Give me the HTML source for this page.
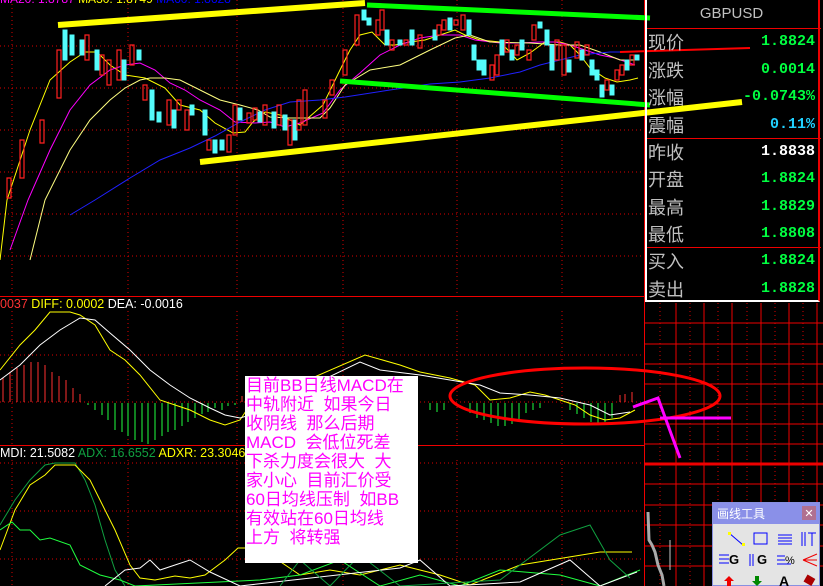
<!DOCTYPE html>
<html><head><meta charset="utf-8"><style>
html,body{margin:0;padding:0;background:#000;width:823px;height:586px;overflow:hidden;}
body{position:relative;font-family:"Liberation Sans","Noto Sans CJK SC",sans-serif;}
.lbl{position:absolute;left:648px;color:#c0c0c0;font-size:18px;font-family:"Noto Sans CJK SC","WenQuanYi Zen Hei",sans-serif;line-height:20px;}
.val{position:absolute;right:8px;color:#00ff40;font-size:15px;font-weight:bold;font-family:"Liberation Mono",monospace;line-height:20px;}
#note{position:absolute;left:245px;top:376px;width:173px;height:187px;background:#fff;color:#f0f;font-size:17px;line-height:19px;font-family:"Liberation Sans","Noto Sans CJK SC",sans-serif;padding:0 0 0 1px;box-sizing:border-box;white-space:pre;overflow:hidden;}
</style></head><body>
<svg width="823" height="586" style="position:absolute;left:0;top:0" xmlns="http://www.w3.org/2000/svg">
<g stroke="#d00" stroke-width="1" stroke-dasharray="1,3" fill="none">
<path d="M0 46H644M0 88H644M0 130H644M0 172H644M0 214H644M0 256H644"/>
<path d="M12 0V297M128 0V297M237 0V297M343 0V297M457 0V297M562 0V297"/>
<path d="M12 311V445M128 311V445M237 311V445M343 311V445M457 311V445M562 311V445"/>
<path d="M0 355H644M0 402H644"/>
<path d="M0 463H644M0 511H644M0 559H644"/>
<path d="M12 460V586M128 460V586M237 460V586M343 460V586M457 460V586M562 460V586"/>
<path d="M660 303V586M690 303V586M718 303V586M747 303V586M775 303V586M803 303V586"/>
</g>
<g stroke="#e00" stroke-width="1" fill="none">
<path d="M0 296.5H644M0 445.5H644M644.5 0V586"/>
<path d="M645 323H823M645 344H823M645 364H823M645 384H823M645 404H823M645 424H823M645 444H823M645 484H823M645 505H823M645 525H823M645 546H823M645 566H823"/>
<path d="M676 303V586M704 303V586M732 303V586M761 303V586M789 303V586M817 303V586"/>
</g>
<path d="M645 464H823" stroke="#e00" stroke-width="3"/>
<polyline fill="none" stroke="#ffff00" stroke-width="1" points="0,260 7,200 30,130 50,80 70,62 85,52 97,52 110,65 125,75 145,78 165,88 180,105 200,110 215,123 233,133 245,132 253,122 265,112 280,115 300,125 323,105 340,70 350,50 360,35 372,32 385,45 395,45 410,42 425,40 440,35 455,30 465,35 480,40 500,42 510,52 517,60 530,53 545,42 560,42 570,45 580,55 590,68 605,78 617,82 630,80 638,78"/>
<polyline fill="none" stroke="#ff00ff" stroke-width="1" points="10,250 28,200 50,150 70,110 90,85 110,70 125,65 140,63 155,70 170,83 185,90 200,100 220,110 235,122 255,123 270,122 285,127 300,123 323,113 340,90 360,73 380,55 400,45 420,38 440,35 460,35 475,40 500,43 520,43 540,42 555,42 570,45 585,50 600,55 615,58 635,65"/>
<polyline fill="none" stroke="#ffff80" stroke-width="1" points="30,260 45,200 70,150 90,120 110,100 125,88 140,80 150,78 165,78 180,80 200,90 220,100 240,105 258,110 270,117 290,118 320,118 330,108 345,85 370,70 400,65 430,50 455,38 470,35 490,42 530,43 560,45 580,45 600,52 620,60 638,60"/>
<polyline fill="none" stroke="#2020ff" stroke-width="1" points="70,215 95,200 130,178 160,160 190,148 215,136 240,122 265,110 290,102 320,100 345,97 390,90 430,84 460,82 490,78 520,72 540,65 560,60 580,55 610,52 638,52"/>
<g fill="#54fcfc" stroke="#54fcfc">
<path d="M63 30h4v30h-4zM70 35h4v20h-4zM80 40h4v15h-4zM95 50h4v20h-4zM122 60h4v20h-4zM137 50h4v10h-4zM150 90h4v30h-4zM157 112h4v10h-4zM172 110h4v18h-4zM190 105h4v10h-4zM203 110h4v25h-4zM213 140h4v13h-4zM220 140h4v10h-4zM238 108h4v12h-4zM258 112h4v10h-4zM272 112h4v16h-4zM283 115h4v15h-4zM293 120h4v20h-4zM362 10h4v10h-4zM367 18h4v7h-4zM385 30h4v15h-4zM398 40h4v5h-4zM410 30h4v15h-4zM433 30h4v10h-4zM448 18h4v12h-4zM467 20h4v15h-4zM472 45h4v15h-4zM477 60h4v10h-4zM482 60h4v15h-4zM500 40h4v15h-4zM510 50h4v10h-4zM520 40h4v10h-4zM538 22h4v6h-4zM545 30h4v15h-4zM550 45h4v25h-4zM567 60h4v12h-4zM580 50h4v10h-4zM590 60h4v15h-4zM595 70h4v10h-4zM600 85h4v12h-4zM610 85h4v10h-4zM625 60h4v10h-4zM635 55h4v5h-4z"/>
</g>
<g fill="none" stroke="#ff2020" stroke-width="1.2">
<path d="M7 178h4v20h-4zM20 140h4v38h-4zM40 120h4v23h-4zM57 50h4v48h-4zM85 35h4v25h-4zM100 55h4v20h-4zM107 60h4v25h-4zM117 50h4v30h-4zM130 45h4v20h-4zM143 85h4v15h-4zM167 100h4v25h-4zM177 100h4v10h-4zM185 110h4v20h-4zM207 140h4v10h-4zM227 135h4v17h-4zM233 105h4v30h-4zM247 113h4v10h-4zM253 108h4v12h-4zM263 105h4v20h-4zM277 105h4v20h-4zM288 120h4v25h-4zM297 100h4v30h-4zM303 90h4v35h-4zM323 100h4v18h-4zM330 80h4v15h-4zM343 50h4v25h-4zM355 15h4v30h-4zM376 20h4v15h-4zM380 10h4v20h-4zM390 40h4v10h-4zM404 40h4v5h-4zM418 35h4v13h-4zM437 25h4v10h-4zM442 20h4v10h-4zM454 20h4v5h-4zM461 15h4v15h-4zM490 65h4v15h-4zM495 55h4v20h-4zM505 40h4v12h-4zM515 45h4v10h-4zM527 50h4v10h-4zM532 25h4v15h-4zM555 40h4v20h-4zM562 45h4v30h-4zM575 42h4v16h-4zM585 45h4v10h-4zM605 80h4v10h-4zM615 70h4v10h-4zM620 65h4v10h-4zM630 55h4v10h-4z"/>
</g>
<path d="M58 25L365 3" stroke="#ffff00" stroke-width="6"/>
<path d="M200 162L742 102" stroke="#ffff00" stroke-width="6"/>
<path d="M367 5L650 18" stroke="#00ff00" stroke-width="5"/>
<path d="M340 81L650 105" stroke="#00ff00" stroke-width="5"/>
<path d="M620 52L750 48" stroke="#ff0000" stroke-width="2"/>
<g stroke="#ff3030" stroke-width="1">
<path d="M3 402V378M10 402V372M17 402V368M24 402V365M31 402V362M38 402V362M45 402V365M52 402V372M59 402V376M66 402V380M73 402V388M80 402V394M242 402V396M620 402V395M625 402V394M632 402V392"/>
</g>
<g stroke="#20ff40" stroke-width="1">
<path d="M88 403V405M95 403V410M102 403V415M108 403V420M115 403V430M122 403V432M128 403V436M135 403V440M142 403V442M148 403V444M155 403V440M162 403V436M168 403V432M175 403V430M182 403V426M188 403V422M195 403V418M202 403V414M208 403V412M215 403V408M222 403V410M228 403V406M235 403V405M430 403V410M437 403V412M444 403V410M470 403V413M477 403V418M484 403V420M491 403V423M498 403V426M505 403V426M512 403V424M519 403V420M526 403V413M533 403V410M540 403V408M570 403V410M577 403V414M584 403V418M591 403V422M598 403V424M605 403V422M612 403V418"/>
</g>
<polyline fill="none" stroke="#ffff00" points="0,370 20,345 35,330 50,312 70,312 80,315 95,325 110,350 125,360 140,375 160,400 175,405 190,410 210,420 225,425 240,420 250,405 365,355 400,365 420,372 450,378 475,385 490,400 510,398 530,392 545,395 560,400 575,405 590,415 605,420 620,418 635,410"/>
<polyline fill="none" stroke="#fff" points="0,380 20,365 40,345 60,330 80,318 95,320 110,333 130,350 150,370 170,385 190,398 210,408 225,415 240,418 250,415 360,362 380,370 420,375 450,380 480,385 500,393 530,395 560,398 590,405 610,415 630,412"/>
<ellipse cx="585" cy="396" rx="135" ry="28" fill="none" stroke="#ff0000" stroke-width="3"/>
<path d="M633 407L658 398L680 458M660 418H731" stroke="#ff00ff" stroke-width="3" fill="none"/>
<polyline fill="none" stroke="#10a040" points="0,525 15,500 30,480 45,465 55,463 75,463 85,480 95,505 105,540 115,570 125,586"/>
<polyline fill="none" stroke="#ffff00" points="0,550 15,510 30,485 45,475 55,465 75,465 90,480 100,500 115,530 130,565 140,578 155,580 175,576 190,578 205,575 225,560 238,548 260,548 300,575 330,570 360,575 400,565 440,575 470,585 520,565 600,552 632,552"/>
<polyline fill="none" stroke="#20ff40" points="0,530 12,522 20,530 30,530 40,540 50,538 70,545 80,565 100,575 120,580 135,586 260,580 300,575 340,560 380,586 420,575 460,586 500,570 560,575 600,586 640,570"/>
<polyline fill="none" stroke="#fff" points="105,586 125,570 140,568 150,560 160,570 175,565 190,560 210,572 240,586 400,568 420,560 450,586 520,582 570,560 600,586 637,572"/>
<polyline fill="none" stroke="#10a040" points="280,586 300,560 330,586 360,555 400,586 500,580 560,535 590,525 610,560 630,578"/>
<polyline fill="none" stroke="#aaa" stroke-width="3" points="648,512 649,540 652,545 655,552 658,565 662,575 664,586"/>
<path d="M670 540V570" stroke="#ccc"/>
</svg>
<div style="position:absolute;left:0;top:-8px;font-size:12px;white-space:nowrap;"><span style="color:#f0f">MA20: 1.8787</span> <span style="color:#ff0">MA30: 1.8749</span> <span style="color:#00f">MA60: 1.8628</span></div>
<div style="position:absolute;left:0;top:297px;font-size:12.5px;white-space:nowrap;line-height:14px;"><span style="color:#f33">0037</span> <span style="color:#ff0">DIFF: 0.0002</span> <span style="color:#fff">DEA: -0.0016</span></div>
<div style="position:absolute;left:0;top:446px;font-size:12.5px;white-space:nowrap;line-height:14px;"><span style="color:#fff">MDI: 21.5082</span> <span style="color:#10a040">ADX: 16.6552</span> <span style="color:#ff0">ADXR: 23.3046</span></div>
<div style="position:absolute;left:645px;top:0;width:175px;height:302px;border-left:2px solid #fff;border-right:2px solid #e00;border-bottom:2px solid #fff;box-sizing:border-box;"></div>
<div style="position:absolute;left:647px;top:28px;width:174px;height:1px;background:#e00"></div>
<div style="position:absolute;left:647px;top:138px;width:174px;height:1px;background:#e00"></div>
<div style="position:absolute;left:647px;top:247px;width:174px;height:1px;background:#e00"></div>
<div style="position:absolute;left:645px;top:5px;width:173px;text-align:center;color:#c0c0c0;font-size:15px;">GBPUSD</div>
<div class="lbl" style="top:32px">现价</div><div class="val" style="top:32px">1.8824</div>
<div class="lbl" style="top:60px">涨跌</div><div class="val" style="top:60px">0.0014</div>
<div class="lbl" style="top:87px">涨幅</div><div class="val" style="top:87px">-0.0743%</div>
<div class="lbl" style="top:115px">震幅</div><div class="val" style="top:115px;color:#20d0ff">0.11%</div>
<div class="lbl" style="top:142px">昨收</div><div class="val" style="top:142px;color:#fff">1.8838</div>
<div class="lbl" style="top:169px">开盘</div><div class="val" style="top:169px">1.8824</div>
<div class="lbl" style="top:197px">最高</div><div class="val" style="top:197px">1.8829</div>
<div class="lbl" style="top:224px">最低</div><div class="val" style="top:224px">1.8808</div>
<div class="lbl" style="top:251px">买入</div><div class="val" style="top:251px">1.8824</div>
<div class="lbl" style="top:279px">卖出</div><div class="val" style="top:279px">1.8828</div>
<div id="note">目前BB日线MACD在
中轨附近  如果今日
收阴线  那么后期
MACD  会低位死差
下杀力度会很大  大
家小心  目前汇价受
60日均线压制  如BB
有效站在60日均线
上方  将转强</div>
<div style="position:absolute;left:712px;top:502px;width:108px;height:84px;background:#e4e4e4;border:1px solid #8890e0;box-sizing:border-box;">
<div style="height:21px;background:#8a90e8;color:#fff;font-size:12px;line-height:21px;padding-left:4px;font-family:'Noto Sans CJK SC',sans-serif;">画线工具<span style="position:absolute;right:3px;top:3px;width:14px;height:14px;background:#b07090;color:#fff;font-size:11px;line-height:14px;text-align:center;">✕</span></div>
<svg width="106" height="62" style="display:block">
<path d="M16 9L30 21" stroke="#00f"/><rect x="15" y="8" width="3" height="3" fill="#ff0"/><rect x="29" y="19" width="3" height="3" fill="#ff0"/>
<rect x="41" y="9" width="13" height="11" fill="none" stroke="#00f"/>
<path d="M65 11h14M65 14h14M65 17h14M65 20h14" stroke="#00f"/>
<path d="M89 8v14M92 8v14M95 9h8M99 9v13" stroke="#00f"/>
<text x="16" y="40" font-size="13" font-weight="bold" fill="#000">G</text><path d="M6 31h10M6 35h10M6 39h10" stroke="#00f"/>
<text x="44" y="40" font-size="13" font-weight="bold" fill="#000">G</text><path d="M37 30v12M40 30v12" stroke="#00f"/>
<text x="72" y="40" font-size="11" fill="#000">%</text><path d="M64 32h8M64 36h8M64 40h14" stroke="#00f"/>
<path d="M90 36L104 30M90 36L104 42M90 36L104 36" stroke="#e00"/>
<path d="M16 52l-5 5h3v5h4v-5h3z" fill="#e00"/><path d="M44 62l-5-5h3v-5h4v5h3z" fill="#080"/>
<text x="66" y="62" font-size="14" font-weight="bold" fill="#000">A</text><rect x="92" y="52" width="9" height="8" fill="#a00" transform="rotate(30 96 56)"/>
</svg></div>
</body></html>
